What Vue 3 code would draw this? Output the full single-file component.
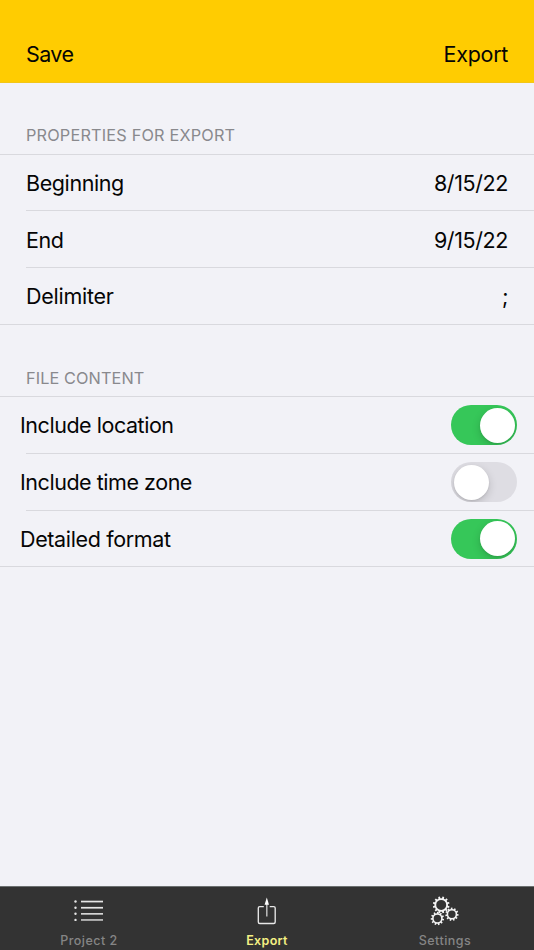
<script setup>
import { ref } from 'vue'

const properties = [
  { label: 'Beginning', value: '8/15/22', cls: 't-beginning' },
  { label: 'End', value: '9/15/22', cls: 't-end' },
  { label: 'Delimiter', value: ';', cls: 't-delimiter' },
]
const options = ref([
  { label: 'Include location', on: true, cls: 't-location' },
  { label: 'Include time zone', on: false, cls: 't-zone' },
  { label: 'Detailed format', on: true, cls: 't-format' },
])

// Outline of a toothed ring with a round hole.
function gear(cx, cy, outer, root, hole, teeth, turn = 0) {
  const step = (Math.PI * 2) / teeth
  const at = (r, a) => `${(cx + r * Math.cos(a)).toFixed(2)} ${(cy + r * Math.sin(a)).toFixed(2)}`
  const points = []
  for (let i = 0; i < teeth; i++) {
    const a = i * step + turn
    points.push(at(root, a - step * 0.28), at(outer, a - step * 0.2), at(outer, a + step * 0.2), at(root, a + step * 0.28))
  }
  return `M${points.join('L')}Z M${cx - hole} ${cy}a${hole} ${hole} 0 1 0 ${hole * 2} 0a${hole} ${hole} 0 1 0 ${-hole * 2} 0Z`
}
const gears = [
  gear(12.2, 9.9, 8.4, 6.8, 5, 12, 0.26),
  gear(22.9, 19.3, 6.7, 5.3, 3.7, 11, 0.1),
  gear(8.4, 23.5, 6.7, 5.3, 3.7, 11, 0.2),
]
</script>

<template>
  <div class="screen">
    <header class="navbar">
      <span class="save">Save</span>
      <span class="export">Export</span>
    </header>

    <main class="content">
      <h2 class="heading first"><span>PROPERTIES FOR EXPORT</span></h2>
      <section class="list">
        <div v-for="row in properties" :key="row.label" class="row">
          <span :class="row.cls">{{ row.label }}</span>
          <span class="value">{{ row.value }}</span>
        </div>
      </section>

      <h2 class="heading second"><span>FILE CONTENT</span></h2>
      <section class="list">
        <div v-for="row in options" :key="row.label" class="row option">
          <span :class="row.cls">{{ row.label }}</span>
          <button class="switch" :class="{ on: row.on }" role="switch" :aria-checked="row.on" @click="row.on = !row.on">
            <i class="knob"></i>
          </button>
        </div>
      </section>
    </main>

    <nav class="tabbar">
      <div class="tab">
        <svg width="32" height="32" viewBox="0 0 32 32">
          <g fill="#e6e6e6">
            <circle cx="2.5" cy="6.5" r="1.2" /><circle cx="2.5" cy="12.7" r="1.2" />
            <circle cx="2.5" cy="18.8" r="1.2" /><circle cx="2.5" cy="24.9" r="1.2" />
            <rect x="8" y="5.7" width="22" height="1.7" /><rect x="8" y="11.9" width="22" height="1.7" />
            <rect x="8" y="18" width="22" height="1.7" fill="#d5d5d5" /><rect x="8" y="24.1" width="22" height="1.7" fill="#c2c2c2" />
          </g>
        </svg>
        <span class="project">Project 2</span>
      </div>
      <div class="tab active">
        <svg width="32" height="32" viewBox="0 0 32 32">
          <path d="M12.8 11.6H8.8Q7.3 11.6 7.3 13.1V27Q7.3 28.5 8.8 28.5H22.7Q24.2 28.5 24.2 27V13.1Q24.2 11.6 22.7 11.6H18.7" fill="none" stroke="#e8e8e8" stroke-width="1.35" />
          <path d="M15.8 8V21.5" fill="none" stroke="#bdbdbd" stroke-width="1.5" />
          <path d="M15.8 2.5L18 9.7H13.6Z" fill="#fff" />
        </svg>
        <span class="tab-export">Export</span>
      </div>
      <div class="tab">
        <svg width="32" height="32" viewBox="0 0 32 32">
          <path v-for="d in gears" :key="d" :d="d" fill="#f4f4f4" fill-rule="evenodd" />
        </svg>
        <span class="settings">Settings</span>
      </div>
    </nav>
  </div>
</template>

<style>
body {
  margin: 0;
  background: #f2f2f7;
}
</style>

<style scoped>
.screen {
  display: flex;
  flex-direction: column;
  width: 534px;
  height: 950px;
  overflow: hidden;
  background: #f2f2f7;
  color: #050505;
  font-family: Inter, "Liberation Sans", sans-serif;
  font-size: 21.5px;
  line-height: 28px;
  letter-spacing: -0.4px;
  white-space: nowrap;
}
.navbar {
  box-sizing: border-box;
  display: flex;
  justify-content: space-between;
  flex: none;
  height: 83px;
  padding: 40px 26px 0;
  background: #ffcc01;
  border-bottom: 1px solid #f3c617;
}
.save {
  letter-spacing: -0.6px;
}
.export {
  letter-spacing: -0.3px;
}
.t-delimiter {
  letter-spacing: -0.25px;
}
.t-location,
.t-zone {
  letter-spacing: -0.46px;
}
.t-format {
  letter-spacing: -0.36px;
}
.content {
  flex: 1;
}
.heading {
  box-sizing: border-box;
  display: flex;
  align-items: flex-end;
  margin: 0;
  padding: 0 26px 8px;
  color: #89898d;
  font-size: 16.3px;
  font-weight: 400;
  line-height: 20px;
  letter-spacing: 0.1px;
}
.first {
  height: 70.67px;
  padding-bottom: 9px;
  letter-spacing: 0.18px;
}
.second {
  height: 71.73px;
}
.list {
  border-top: 1px solid #d9d9de;
}
.row {
  box-sizing: border-box;
  display: flex;
  align-items: center;
  justify-content: space-between;
  height: 56.67px;
  margin-left: 26px;
  padding: 1px 26px 0 0;
  border-bottom: 1px solid #d9d9de;
}
.row:last-child {
  margin-left: 0;
  padding-left: 26px;
}
.option > span {
  margin-left: -6px;
}
.option {
  padding-top: 0.5px;
  padding-right: 17px;
}
.switch {
  box-sizing: border-box;
  flex: none;
  display: flex;
  width: 66px;
  height: 40px;
  padding: 2.5px;
  border: 0;
  border-radius: 20px;
  background: #dedde3;
  overflow: hidden;
}
.switch.on {
  justify-content: flex-end;
  background: #36c759;
}
.knob {
  width: 35px;
  height: 35px;
  border-radius: 50%;
  background: #fff;
  box-shadow: 0 3px 8px rgba(0, 0, 0, 0.17), 0 1px 2px rgba(0, 0, 0, 0.08);
}
.tabbar {
  box-sizing: border-box;
  display: grid;
  grid-template-columns: repeat(3, 1fr);
  flex: none;
  height: 64px;
  padding-top: 8px;
  border-top: 1px solid #6c7070;
  background: #333;
}
.tab {
  display: flex;
  flex-direction: column;
  align-items: center;
  color: #858585;
  font-size: 12.5px;
  font-weight: 500;
  line-height: 16px;
  letter-spacing: 0.5px;
}
.tab svg {
  display: block;
  margin-bottom: 6px;
}
.settings {
  letter-spacing: 0.5px;
}
.tab.active {
  color: #f3f084;
  font-weight: 600;
  letter-spacing: 0.3px;
}
</style>
